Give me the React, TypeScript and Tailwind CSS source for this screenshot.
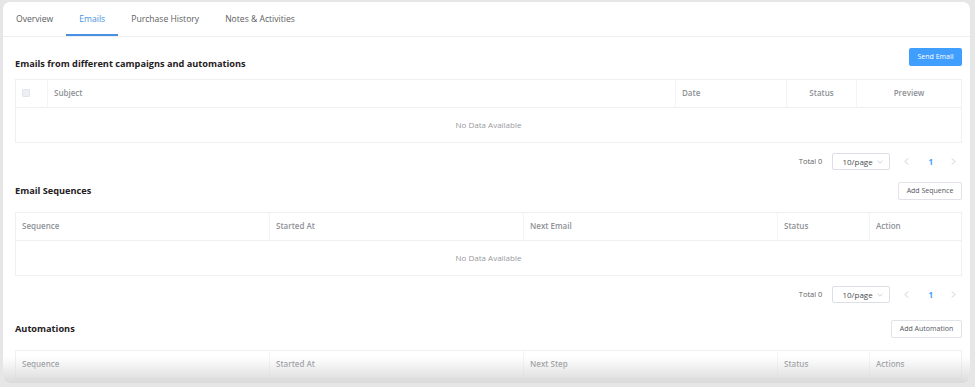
import React from "react";

const font = { fontFamily: '"Open Sans", "Liberation Sans", sans-serif' };

type Col = { label: string; w: string; align?: "left" | "center"; check?: boolean };

const emailCols: Col[] = [
    { label: "", w: "w-[32px]", check: true },
    { label: "Subject", w: "flex-1" },
    { label: "Date", w: "w-[111px]" },
    { label: "Status", w: "w-[70px]", align: "center" },
    { label: "Preview", w: "w-[104px]", align: "center" },
];

const seqCols: Col[] = [
    { label: "Sequence", w: "w-[254px]" },
    { label: "Started At", w: "w-[254px]" },
    { label: "Next Email", w: "w-[254px]" },
    { label: "Status", w: "w-[92px]" },
    { label: "Action", w: "flex-1" },
];

const autoCols: Col[] = [
    { label: "Sequence", w: "w-[254px]" },
    { label: "Started At", w: "w-[254px]" },
    { label: "Next Step", w: "w-[254px]" },
    { label: "Status", w: "w-[92px]" },
    { label: "Actions", w: "flex-1" },
];

const Table = ({ cols, body = true }: { cols: Col[]; body?: boolean }) => (
    <div className="border border-[#eef0f4]">
        <div className="flex h-[28px] border-b border-[#eef0f4]">
            {cols.map((c, i) => (
                <div
                    key={i}
                    className={`${c.w} flex items-center px-[6px] pb-[1px] text-[8px] font-semibold text-[#8e9196] ${
                        c.align === "center" ? "justify-center" : ""
                    } ${i < cols.length - 1 ? "border-r border-[#f3f4f7]" : ""}`}
                >
                    {c.check ? (
                        <span className="block h-[8px] w-[8px] rounded-[1px] border border-[#e2e5ec] bg-[#eceef4]" />
                    ) : (
                        c.label
                    )}
                </div>
            ))}
        </div>
        {body && (
            <div className="flex h-[34px] items-center justify-center text-[8px] text-[#98999d]">
                No Data Available
            </div>
        )}
    </div>
);

const Pagination = () => (
    <div className="flex items-center justify-end pr-[6px]">
        <span className="text-[7.5px] text-[#5f6266]">Total 0</span>
        <div className="ml-[10px] flex h-[17px] w-[58px] items-center justify-between rounded-[2px] border border-[#dcdfe6] pl-[9px] pr-[6px] text-[8px] text-[#4a4c50]">
            10/page
            <svg width="6" height="4" viewBox="0 0 6 4" fill="none">
                <path d="M0.5 0.8L3 3.2L5.5 0.8" stroke="#c0c4cc" strokeWidth="0.8" />
            </svg>
        </div>
        <svg className="ml-[14px]" width="5" height="7" viewBox="0 0 5 7" fill="none">
            <path d="M4 0.5L1 3.5L4 6.5" stroke="#c4c6cc" strokeWidth="0.9" />
        </svg>
        <span className="ml-[19px] text-[8px] font-bold text-[#409eff]">1</span>
        <svg className="ml-[18px]" width="5" height="7" viewBox="0 0 5 7" fill="none">
            <path d="M1 0.5L4 3.5L1 6.5" stroke="#c4c6cc" strokeWidth="0.9" />
        </svg>
    </div>
);

const OutlineButton = ({ children, w }: { children: React.ReactNode; w: string }) => (
    <button className={`${w} h-[18px] rounded-[2px] border border-[#e1e3e8] bg-white text-[7px] text-[#55585d]`}>
        {children}
    </button>
);

const tabs = ["Overview", "Emails", "Purchase History", "Notes & Activities"];

export default function App() {
    return (
        <div className="h-[387px] w-[975px] bg-[#e6e6e6] pb-[4px] pl-[3px] pr-[5px] pt-[2px]" style={font}>
            <div className="relative h-full overflow-hidden rounded-[7px] bg-white">
                <div className="flex h-[35px] border-b border-[#eceef2]">
                    {tabs.map((t, i) => (
                        <div
                            key={t}
                            className={`flex items-center px-[13px] text-[8.6px] ${
                                i === 1
                                    ? "border-b-2 border-[#4a90e2] pt-[2px] text-[#4a8fdc]"
                                    : "text-[#5c5e62]"
                            }`}
                        >
                            {t}
                        </div>
                    ))}
                </div>

                <div className="pl-[12px] pr-[8px]">
                    <div className="mt-[11px] flex items-end justify-between">
                        <h2 className="mb-[-3px] text-[9.2px] font-bold leading-[10px] text-[#1f2023]">
                            Emails from different campaigns and automations
                        </h2>
                        <button className="h-[18px] w-[53px] rounded-[2px] bg-[#409eff] text-[7px] text-white">
                            Send Email
                        </button>
                    </div>
                    <div className="mt-[13px]">
                        <Table cols={emailCols} />
                    </div>
                    <div className="mt-[10px]">
                        <Pagination />
                    </div>

                    <div className="mt-[12px] flex items-center justify-between">
                        <h2 className="text-[9.2px] font-bold text-[#1f2023]">Email Sequences</h2>
                        <OutlineButton w="w-[64px]">Add Sequence</OutlineButton>
                    </div>
                    <div className="mt-[12px]">
                        <Table cols={seqCols} />
                    </div>
                    <div className="mt-[10px]">
                        <Pagination />
                    </div>

                    <div className="mt-[17px] flex items-center justify-between">
                        <h2 className="text-[9.2px] font-bold text-[#1f2023]">Automations</h2>
                        <OutlineButton w="w-[71px]">Add Automation</OutlineButton>
                    </div>
                    <div className="mt-[12px]">
                        <Table cols={autoCols} body={false} />
                    </div>
                </div>

                <div className="pointer-events-none absolute bottom-0 left-0 right-0 h-[26px] bg-gradient-to-b from-transparent to-[#dadada]" />
            </div>
        </div>
    );
}
